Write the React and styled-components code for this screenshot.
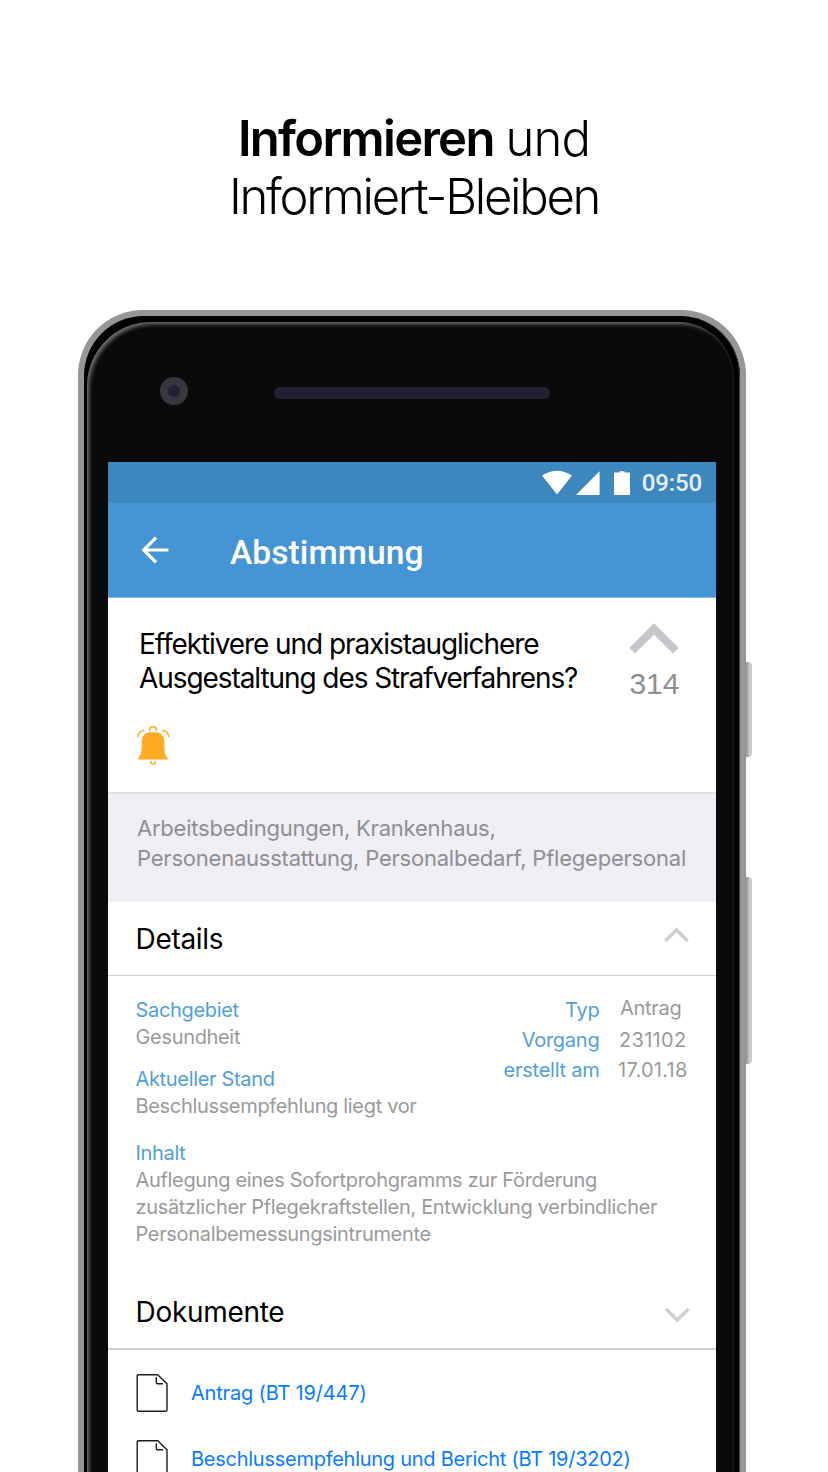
import React from "react";
import styled, { createGlobalStyle } from "styled-components";

const GlobalStyle = createGlobalStyle`
  * { box-sizing: border-box; }
  html, body { margin: 0; padding: 0; background: #fff; }
  body { font-family: "Inter", "Liberation Sans", sans-serif; color: #000; overflow: hidden; }
  svg { display: block; flex: none; }
`;

const Page = styled.main`
  display: flex;
  flex-direction: column;
  width: 828px;
  height: 1472px;
  overflow: hidden;
  background: #fff;
`;

const Headline = styled.h1`
  flex: none;
  height: 310px;
  margin: 0;
  padding-top: 110px;
  text-align: center;
  font-size: 49px;
  line-height: 58px;
  font-weight: 290;
  white-space: nowrap;
`;

const HeadlineRow = styled.span`
  display: block;
  letter-spacing: ${(p) => p.$tracking};
  word-spacing: ${(p) => p.$wordGap || "0"};
`;

const Strong = styled.strong`
  font-weight: 600;
  letter-spacing: -1.7px;
`;

const Phone = styled.div`
  position: relative;
  flex: 1;
  display: flex;
  width: 668px;
  margin-left: 78px;
  padding: 6px 6px 0;
  border-radius: 65px 65px 0 0;
  background: #979598;
`;

const SideButton = styled.i`
  position: absolute;
  left: 668px;
  top: ${(p) => p.$top}px;
  width: 6px;
  height: ${(p) => p.$height}px;
  border-radius: 0 4px 4px 0;
  background: linear-gradient(90deg, #8d8d8d 0, #b0b0b0 30%, #cbcbcb 55%, #cdcdcd 100%);
`;

const Bezel = styled.div`
  flex: 1;
  display: flex;
  padding: 6px 6px 0 3px;
  border-radius: 60px 60px 0 0;
  background: #000;
  box-shadow: inset -1px 0 0 #3a3839;
`;

const Face = styled.div`
  flex: 1;
  display: flex;
  flex-direction: column;
  padding: 0 18px 0 21px;
  border-radius: 64px 56px 0 0;
  background: #0a0a0a;
  box-shadow: inset 3px 3px 4px -1px #747474, inset -2px 0 2px -1px #1c1c1c;
`;

const Earpiece = styled.div`
  flex: none;
  display: flex;
  align-items: flex-start;
  height: 140px;
  padding: 55px 0 0 52.4px;
`;

const Camera = styled.div`
  width: 27.6px;
  height: 28px;
  border-radius: 50%;
  border: 8px solid #39363f;
  background: #232032;
`;

const Speaker = styled.div`
  width: 276px;
  height: 12px;
  margin: 10px 0 0 86px;
  border-radius: 6px;
  background: #232034;
`;

const Screen = styled.div`
  flex: 1;
  min-height: 0;
  width: 608px;
  overflow: hidden;
  background: #fff;
`;

const StatusBar = styled.div`
  display: flex;
  align-items: center;
  justify-content: flex-end;
  height: 41px;
  padding: 1px 14px 0 0;
  background: #3d87bf;
  color: #e6f0f8;
  font: 500 24px/40px "Roboto", sans-serif;
  letter-spacing: -0.15px;
`;

const StatusIcons = styled.svg`
  margin: -1px 10px 0 0;
`;

const AppBar = styled.header`
  display: flex;
  align-items: center;
  gap: 61px;
  height: 95px;
  padding-left: 33px;
  border-bottom: 1px solid #80b6e1;
  background: #4594d3;
`;

const AppTitle = styled.h2`
  margin: 6px 0 0;
  color: #fff;
  font: 500 33.5px/40px "Roboto", sans-serif;
  letter-spacing: 0.1px;
`;

const Proposal = styled.section`
  display: flex;
  justify-content: space-between;
  height: 196px;
  padding: 29px 36.5px 0 31px;
  border-bottom: 2px solid #dfdee3;
`;

const Question = styled.h3`
  margin: 0;
  font-weight: 400;
  font-size: 28px;
  line-height: 34px;
  letter-spacing: -1.08px;
  white-space: nowrap;
`;

const Bell = styled.svg`
  margin: 29px 0 0 -4px;
`;

const Votes = styled.div`
  display: flex;
  flex-direction: column;
  align-items: center;
  margin-top: -4px;
  color: #8e8e93;
  font: 400 30px/34px "Liberation Sans", sans-serif;

  svg { margin-bottom: 13px; }
`;

const Tags = styled.p`
  height: 108px;
  margin: 0;
  padding: 19px 0 0 29px;
  background: #efeef4;
  color: #8e8e93;
  font-size: 22px;
  line-height: 30px;
  letter-spacing: -0.22px;
  white-space: nowrap;
`;

const SectionHead = styled.div`
  display: flex;
  align-items: center;
  justify-content: space-between;
  height: ${(p) => p.$height}px;
  padding: 0 26px 0 27.5px;
  border-bottom: ${(p) => p.$rule} solid #d0d0d2;
`;

const SectionTitle = styled.h4`
  margin: 0;
  font-weight: 400;
  font-size: 28px;
  line-height: 34px;
  letter-spacing: -0.3px;
`;

const ChevronIcon = styled.svg`
  margin: ${(p) => (p.$down ? "6px 0 0" : "0 0 8px")};
`;

const Details = styled.section`
  display: flex;
  justify-content: space-between;
  height: 299px;
  padding: 21px 28px 0 27.5px;
  color: #9a9a9a;
  font-size: 20px;
  line-height: 27px;
  letter-spacing: -0.33px;
  white-space: nowrap;
`;

const Facts = styled.dl`
  width: 360px;
  margin: 0;
`;

const Label = styled.dt`
  color: #509fdb;
`;

const Value = styled.dd`
  margin: 0 0 ${(p) => p.$gap || 0}px;
`;

const Meta = styled.div`
  display: grid;
  grid-template-columns: auto 70px;
  grid-auto-rows: 30px;
  column-gap: 18px;
  height: 90px;
  margin-top: -2px;
  line-height: 30px;
`;

const MetaLabel = styled.span`
  padding-right: 0.6px;
  color: #509fdb;
  text-align: right;
  letter-spacing: -0.26px;
`;

const MetaValue = styled.span`
  padding-left: ${(p) => p.$inset || 0}px;
  margin-top: ${(p) => p.$lift || 0}px;
  letter-spacing: ${(p) => p.$tracking};
`;

const Documents = styled.section`
  padding: 10px 0 0 28px;
`;

const DocumentLink = styled.a`
  display: flex;
  align-items: center;
  gap: 23px;
  height: 66px;
  color: #087cff;
  font-size: 20px;
  letter-spacing: ${(p) => p.$tracking};
  white-space: nowrap;
`;

const Chevron = ({ down }) => (
  <ChevronIcon $down={down} width="26" height="16" viewBox="0 0 26 16" fill="none" stroke="#cfced2" strokeWidth="3.4">
    <path d={down ? "M2 2L13.3 13L24.5 2" : "M1.2 14L12.5 3L23.7 14"} />
  </ChevronIcon>
);

const DocumentIcon = () => (
  <svg width="32" height="38" viewBox="0 0 32 38" fill="none" stroke="#1c1c1c" strokeWidth="1.4" strokeLinejoin="round">
    <path d="M2.3 .8H21.7L31 9.8V36.1Q31 37.2 29.9 37.2H2.3Q1.2 37.2 1.2 36.1V1.9Q1.2.8 2.3.8Z" />
    <path d="M20.3 3.2V8.7Q20.3 9.8 21.4 9.8H27" />
  </svg>
);

export default function App() {
  return (
    <Page>
      <GlobalStyle />
      <Headline>
        <HeadlineRow $tracking="-0.9px" $wordGap="-1px"><Strong>Informieren</Strong> und</HeadlineRow>
        <HeadlineRow $tracking="-2.28px">Informiert-Bleiben</HeadlineRow>
      </Headline>
      <Phone>
        <SideButton $top={352} $height={95} />
        <SideButton $top={567} $height={187} />
        <Bezel>
          <Face>
            <Earpiece>
              <Camera />
              <Speaker />
            </Earpiece>
            <Screen>
              <StatusBar>
                <StatusIcons width="90" height="26" viewBox="0 0 90 26" fill="#fff">
                  <path d="M0 5.5Q15-4.2 30 5.5L15 24.5Z" />
                  <path d="M34 25H57.6V1.2Z" />
                  <path d="M72 2.6H77.5V1.2H82.5V2.6H88V25H72Z" />
                </StatusIcons>
                09:50
              </StatusBar>
              <AppBar>
                <svg width="28" height="28" viewBox="0 0 28 28" fill="none" stroke="#fff" strokeWidth="3.2">
                  <path d="M27.4 14H3M15 1.7L2.7 14L15 26.3" />
                </svg>
                <AppTitle>Abstimmung</AppTitle>
              </AppBar>
              <Proposal>
                <div>
                  <Question>
                    Effektivere und praxistauglichere<br />
                    Ausgestaltung des Strafverfahrens?
                  </Question>
                  <Bell width="36" height="42" viewBox="135 724 36 42" fill="none" stroke="#ffab24" strokeWidth="1.5">
                    <path fill="#ffab24" stroke="none" d="M150.5 732.3H155.5C161.2 732.3 164.4 736.4 164.4 742V746C164.4 752 165.5 755.2 167.3 757.6L168.2 759.6H137.7L138.7 757.6C140.7 755 141.7 752 141.7 746V742C141.7 736.4 144.8 732.3 150.5 732.3Z" />
                    <path d="M149.8 731V729.7C149.8 725.6 156.4 725.6 156.4 729.7V731M150.7 761C150.7 764.9 155.5 764.9 155.5 761M137.7 737.3Q138 731.3 144.2 730.2M162.2 730.2Q168.4 731.3 168.9 737.3" />
                  </Bell>
                </div>
                <Votes>
                  <svg width="50" height="31" viewBox="0 0 50 31" fill="none" stroke="#c7c6cc" strokeWidth="8">
                    <path d="M3.2 27.6L25 5.8L46.8 27.6" />
                  </svg>
                  314
                </Votes>
              </Proposal>
              <Tags>
                Arbeitsbedingungen, Krankenhaus,<br />
                Personenausstattung, Personalbedarf, Pflegepersonal
              </Tags>
              <SectionHead $height={74} $rule="1px">
                <SectionTitle>Details</SectionTitle>
                <Chevron />
              </SectionHead>
              <Details>
                <Facts>
                  <Label>Sachgebiet</Label>
                  <Value $gap={15}>Gesundheit</Value>
                  <Label>Aktueller Stand</Label>
                  <Value $gap={20}>Beschlussempfehlung liegt vor</Value>
                  <Label>Inhalt</Label>
                  <Value>
                    Auflegung eines Sofortprohgramms zur Förderung<br />
                    zusätzlicher Pflegekraftstellen, Entwicklung verbindlicher<br />
                    Personalbemessungsintrumente
                  </Value>
                </Facts>
                <Meta>
                  <MetaLabel>Typ</MetaLabel>
                  <MetaValue $inset={2} $lift={-2} $tracking="-0.3px">Antrag</MetaValue>
                  <MetaLabel>Vorgang</MetaLabel>
                  <MetaValue $inset={1} $tracking="0.3px">231102</MetaValue>
                  <MetaLabel>erstellt am</MetaLabel>
                  <MetaValue $tracking="0.25px">17.01.18</MetaValue>
                </Meta>
              </Details>
              <SectionHead $height={75} $rule="2px">
                <SectionTitle>Dokumente</SectionTitle>
                <Chevron down />
              </SectionHead>
              <Documents>
                <DocumentLink $tracking="-0.18px"><DocumentIcon />Antrag (BT 19/447)</DocumentLink>
                <DocumentLink $tracking="-0.26px"><DocumentIcon />Beschlussempfehlung und Bericht (BT 19/3202)</DocumentLink>
              </Documents>
            </Screen>
          </Face>
        </Bezel>
      </Phone>
    </Page>
  );
}
